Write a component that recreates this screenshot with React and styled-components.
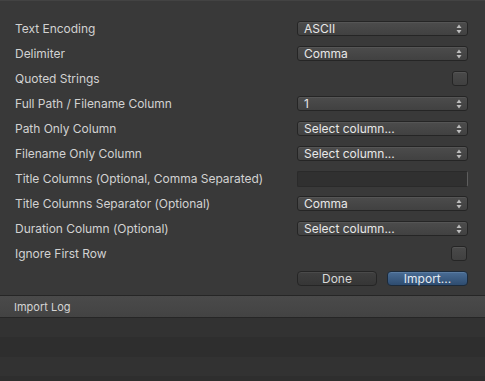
import React from 'react'
import styled, { createGlobalStyle } from 'styled-components'

const GlobalStyle = createGlobalStyle`
    html, body {
        margin: 0;
        padding: 0;
        background: #393939;
    }
    body {
        font-family: Inter, "Noto Sans", "Liberation Sans", sans-serif;
        -webkit-font-smoothing: antialiased;
    }
`

const Window = styled.div`
    width: 485px;
    height: 381px;
    display: flex;
    flex-direction: column;
    background: #393939;
    border-top: 1px solid #434343;
    box-sizing: border-box;
    overflow: hidden;
    & > * {
        flex-shrink: 0;
    }
`
const Form = styled.div`
    display: flex;
    flex-direction: column;
    padding: 15px 17px 0 15px;
`
const Row = styled.div`
    height: 25px;
    display: flex;
    align-items: center;
    justify-content: ${p => (p.$end ? 'flex-end' : 'space-between')};
`
const Label = styled.div`
    font-size: 12px;
    color: #d2d2d2;
    letter-spacing: -0.03px;
`
const Popup = styled.div`
    width: 171px;
    height: 15px;
    box-sizing: border-box;
    display: flex;
    align-items: center;
    justify-content: space-between;
    padding: 0 5px 0 6px;
    border: 1px solid #252525;
    border-radius: 3px;
    background: linear-gradient(#4c4c4c, #414141);
    box-shadow: inset 0 1px 0 #555;
    color: #e8e8e8;
    font-size: 12px;
`
const Check = styled.div`
    width: 16px;
    height: 15px;
    box-sizing: border-box;
    margin-right: ${p => p.$shift || 0}px;
    border: 1px solid #252525;
    border-radius: 3px;
    background: linear-gradient(#4a4a4a, #404040);
    box-shadow: inset 0 1px 0 #555;
`
const TextField = styled.div`
    width: 171px;
    height: 16px;
    box-sizing: border-box;
    background: #303030;
    border: 1px solid #2a2a2a;
    border-right-color: #5e5e5e;
    border-radius: 2px;
`
const Buttons = styled.div`
    display: flex;
    gap: 10px;
`
const Button = styled.div`
    width: ${p => p.$w}px;
    height: 15px;
    box-sizing: border-box;
    display: flex;
    align-items: center;
    justify-content: center;
    border: 1px solid ${p => (p.$primary ? '#1c2a3a' : '#252525')};
    border-radius: 4px;
    background: ${p => (p.$primary ? 'linear-gradient(#4a6d95, #2e4c70)' : 'linear-gradient(#3f3f3f, #363636)')};
    box-shadow: inset 0 1px 0 ${p => (p.$primary ? '#5a7ca2' : '#4a4a4a')};
    color: ${p => (p.$primary ? '#e6ecf3' : '#d8d8d8')};
    font-size: 12px;
`
const LogHeader = styled.div`
    margin-top: 4px;
    height: 23px;
    box-sizing: border-box;
    display: flex;
    align-items: center;
    padding-left: 14px;
    border-top: 1px solid #262626;
    border-bottom: 1px solid #262626;
    background: linear-gradient(#4a4a4a, #434343);
    color: #d4d4d4;
    font-size: 11px;
`
const LogRow = styled.div`
    height: 19.3px;
    background: ${p => (p.$odd ? '#2e2e2e' : '#323232')};
`

const Arrows = () => (
    <svg width="6" height="10" viewBox="0 0 6 10">
        <path d="M3 0.5 L5.5 4 H0.5 Z" fill="#bdbdbd" />
        <path d="M3 9.5 L5.5 6 H0.5 Z" fill="#bdbdbd" />
    </svg>
)

const fields = [
    { label: 'Text Encoding', type: 'popup', value: 'ASCII' },
    { label: 'Delimiter', type: 'popup', value: 'Comma' },
    { label: 'Quoted Strings', type: 'check' },
    { label: 'Full Path / Filename Column', type: 'popup', value: '1' },
    { label: 'Path Only Column', type: 'popup', value: 'Select column...' },
    { label: 'Filename Only Column', type: 'popup', value: 'Select column...' },
    { label: 'Title Columns (Optional, Comma Separated)', type: 'text' },
    { label: 'Title Columns Separator (Optional)', type: 'popup', value: 'Comma' },
    { label: 'Duration Column (Optional)', type: 'popup', value: 'Select column...' },
    { label: 'Ignore First Row', type: 'check', shift: 1 },
]

const renderControl = field => {
    if (field.type === 'popup') {
        return <Popup><span>{field.value}</span><Arrows /></Popup>
    }
    if (field.type === 'check') return <Check $shift={field.shift} />
    return <TextField />
}

export default function App() {
    return (<Window>
        <GlobalStyle />
        <Form>
            {fields.map(field => (
                <Row key={field.label}>
                    <Label>{field.label}</Label>
                    {renderControl(field)}
                </Row>
            ))}
            <Row $end>
                <Buttons>
                    <Button $w={80}>Done</Button>
                    <Button $w={81} $primary>Import...</Button>
                </Buttons>
            </Row>
        </Form>
        <LogHeader>Import Log</LogHeader>
        {[0, 1, 2, 3].map(i => <LogRow key={i} $odd={i % 2 === 1} />)}
    </Window>)
}
